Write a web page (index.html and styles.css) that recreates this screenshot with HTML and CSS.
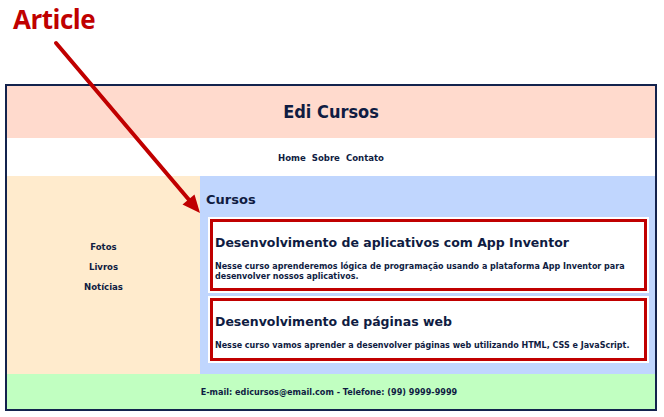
FILE: index.html
```html
<!DOCTYPE html>
<html lang="pt-BR">
<head>
<meta charset="utf-8">
<title>Edi Cursos</title>
<link rel="stylesheet" href="styles.css">
</head>
<body>
<div class="annot">
  <span class="annot-label">Article</span>
</div>
<div class="site">
  <header class="site-header"><h1>Edi Cursos</h1></header>
  <nav class="site-nav">
    <a href="#">Home</a>
    <a href="#">Sobre</a>
    <a href="#">Contato</a>
  </nav>
  <div class="content">
    <aside class="sidebar">
      <a href="#">Fotos</a>
      <a href="#">Livros</a>
      <a href="#">Notícias</a>
    </aside>
    <main class="main">
      <h2>Cursos</h2>
      <article class="course">
        <div class="course-inner">
          <h3>Desenvolvimento de aplicativos com App Inventor</h3>
          <p>Nesse curso aprenderemos lógica de programação usando a plataforma App Inventor para desenvolver nossos aplicativos.</p>
        </div>
      </article>
      <article class="course">
        <div class="course-inner">
          <h3>Desenvolvimento de páginas web</h3>
          <p>Nesse curso vamos aprender a desenvolver páginas web utilizando HTML, CSS e JavaScript.</p>
        </div>
      </article>
    </main>
  </div>
  <footer class="site-footer">E-mail: edicursos@email.com - Telefone: (99) 9999-9999</footer>
</div>
<svg class="arrow" width="664" height="417" viewBox="0 0 664 417">
  <line x1="56" y1="43" x2="190" y2="201" stroke="#c00000" stroke-width="4" stroke-linecap="round"/>
  <polygon points="200,213 182.5,204.5 194.5,194.5" fill="#c00000"/>
</svg>
</body>
</html>
```

FILE: styles.css
```css
* { box-sizing: border-box; }
html, body { margin: 0; padding: 0; background: #fff; }
body {
  width: 664px;
  height: 417px;
  position: relative;
  overflow: hidden;
  font-family: "DejaVu Sans", Verdana, sans-serif;
  color: #0f1c42;
}
.annot {
  height: 84px;
  padding: 4px 0 0 13px;
}
.annot-label {
  font-family: "Open Sans", "Liberation Sans", sans-serif;
  font-weight: 700;
  font-size: 26px;
  line-height: 30px;
  color: #c00000;
  letter-spacing: -0.5px;
}
.site {
  margin-left: 5px;
  width: 652px;
  height: 327px;
  border: 2px solid #13234d;
  display: flex;
  flex-direction: column;
}
.site-header {
  height: 52px;
  background: #ffdacd;
  display: flex;
  align-items: center;
  justify-content: center;
}
.site-header h1 {
  margin: 0 0 2px;
  font-family: "DejaVu Sans Condensed", "DejaVu Sans", sans-serif;
  font-weight: 700;
  font-size: 18px;
}
.site-nav {
  height: 38px;
  background: #fff;
  display: flex;
  align-items: center;
  justify-content: center;
  gap: 6px;
  padding-top: 1px;
}
.site-nav a, .sidebar a {
  font-family: "DejaVu Sans Condensed", "DejaVu Sans", sans-serif;
  font-weight: 700;
  font-size: 9.5px;
  color: #0f1c42;
  text-decoration: none;
}
.content {
  height: 198px;
  display: flex;
}
.sidebar {
  width: 193px;
  background: #ffebcd;
  display: flex;
  flex-direction: column;
  align-items: center;
  justify-content: center;
  gap: 8px;
  padding-bottom: 16px;
}
.sidebar a { line-height: 12px; }
.main {
  flex: 1;
  background: #c0d6fe;
  padding: 15px 6px 0 8px;
}
.main h2 {
  margin: 0 0 9px -2px;
  font-size: 13px;
  line-height: 17px;
  font-weight: 700;
}
.course {
  background: #fff;
  padding: 2px;
  margin-bottom: 3px;
}
.course-inner {
  border: 3px solid #c00000;
  padding: 12px 0 0 2px;
}
.course:first-of-type .course-inner { height: 72px; }
.course:last-of-type .course-inner { height: 63px; }
.course h3 {
  margin: 0;
  font-size: 12.5px;
  line-height: 18px;
  font-weight: 700;
}
.course p {
  margin: 10px 0 0;
  font-size: 8px;
  line-height: 10px;
  font-weight: 700;
}
.site-footer {
  flex: 1;
  background: #c1ffc1;
  display: flex;
  align-items: center;
  justify-content: center;
  font-family: "DejaVu Sans Condensed", "DejaVu Sans", sans-serif;
  font-weight: 700;
  font-size: 9px;
  padding-right: 4px;
}
.arrow {
  position: absolute;
  left: 0;
  top: 0;
  pointer-events: none;
}
```
